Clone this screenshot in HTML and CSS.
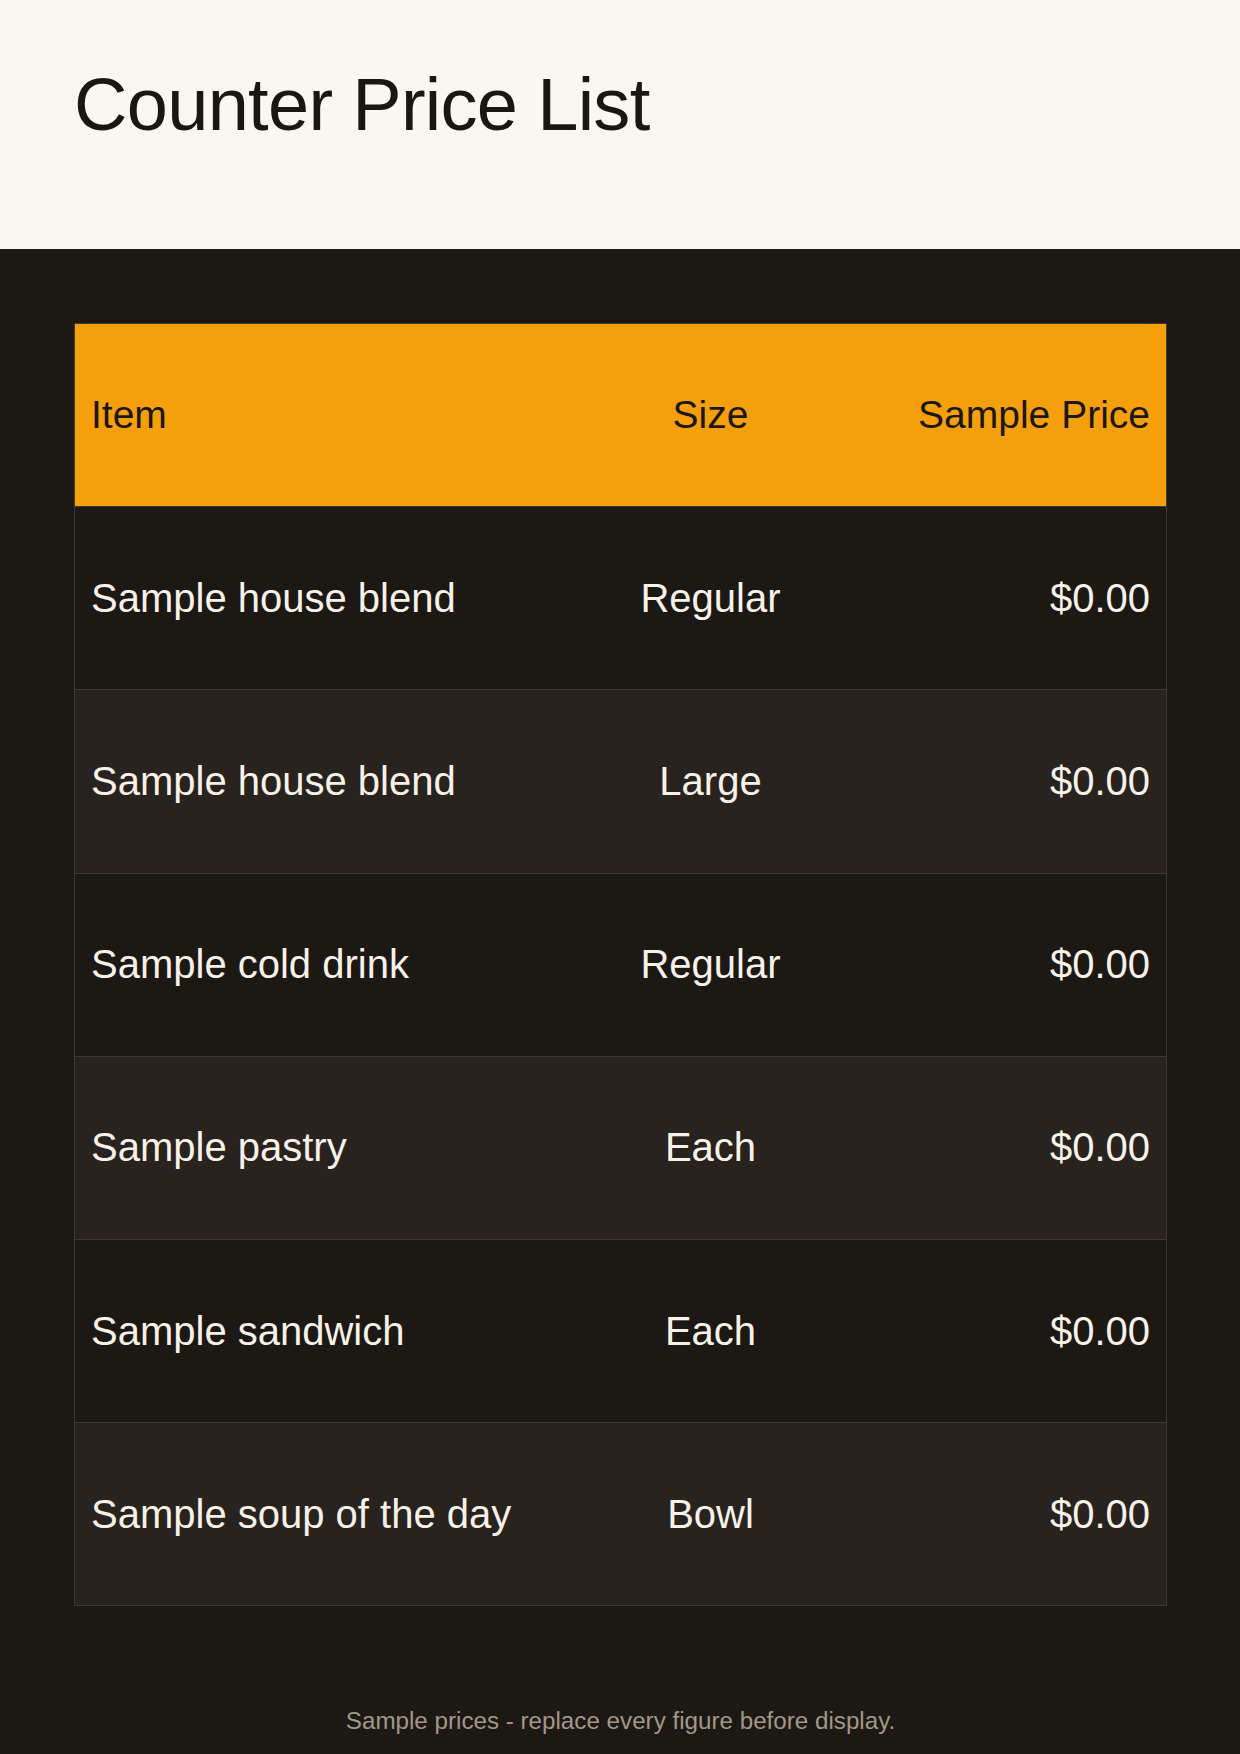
FILE: index.html
```html
<!DOCTYPE html>
<html lang="en">

<head>
    <meta charset="UTF-8">
    <meta name="viewport" content="width=device-width, initial-scale=1.0">
    <title>Counter Price List</title>
    <link rel="stylesheet" href="styles.css">
</head>

<body>
    <header class="page-header">
        <h1 class="page-title">Counter Price List</h1>
    </header>
    <main class="board">
        <table class="price-table">
            <colgroup>
                <col class="col-item">
                <col class="col-size">
                <col class="col-price">
            </colgroup>
            <thead>
                <tr>
                    <th class="cell-item">Item</th>
                    <th class="cell-size">Size</th>
                    <th class="cell-price">Sample Price</th>
                </tr>
            </thead>
            <tbody>
                <tr>
                    <td class="cell-item">Sample house blend</td>
                    <td class="cell-size">Regular</td>
                    <td class="cell-price">$0.00</td>
                </tr>
                <tr>
                    <td class="cell-item">Sample house blend</td>
                    <td class="cell-size">Large</td>
                    <td class="cell-price">$0.00</td>
                </tr>
                <tr>
                    <td class="cell-item">Sample cold drink</td>
                    <td class="cell-size">Regular</td>
                    <td class="cell-price">$0.00</td>
                </tr>
                <tr>
                    <td class="cell-item">Sample pastry</td>
                    <td class="cell-size">Each</td>
                    <td class="cell-price">$0.00</td>
                </tr>
                <tr>
                    <td class="cell-item">Sample sandwich</td>
                    <td class="cell-size">Each</td>
                    <td class="cell-price">$0.00</td>
                </tr>
                <tr>
                    <td class="cell-item">Sample soup of the day</td>
                    <td class="cell-size">Bowl</td>
                    <td class="cell-price">$0.00</td>
                </tr>
            </tbody>
        </table>
        <p class="note">Sample prices - replace every figure before display.</p>
    </main>
</body>

</html>
```

FILE: styles.css
```css
/* Counter board: light title strip, dark price table */
html {
    background-color: #1c1814;
}

body {
    margin: 0;
    font-family: 'Liberation Sans', Arial, sans-serif;
    color: #f7f1e8;
    background-color: #1c1814;
}

.page-header {
    box-sizing: border-box;
    height: 249px;
    padding: 68px 74px 0;
    background-color: #faf7f2;
}

.page-title {
    margin: 0;
    font-size: 74px;
    font-weight: 400;
    line-height: 1;
    letter-spacing: -0.7px;
    color: #1a1612;
}

.board {
    padding: 74px 73px 20px 74px;
}

.price-table {
    width: 100%;
    border-collapse: collapse;
    table-layout: fixed;
    border: 1px solid #3f3933;
}

.col-item {
    width: 511px;
}

.col-size {
    width: 250px;
}

th, td {
    height: 182.2px;
    padding: 0 16px 0 16px;
    vertical-align: middle;
    font-weight: 400;
    border-bottom: 1px solid #3f3933;
}

th {
    background-color: #f59f0b;
    color: #1c1712;
    font-size: 39px;
}

td {
    font-size: 40px;
}

tbody tr:nth-child(odd) {
    background-color: #1c1814;
}

tbody tr:nth-child(even) {
    background-color: #28231f;
}

.cell-item {
    text-align: left;
}

.cell-size {
    text-align: center;
}

.cell-price {
    text-align: right;
}

.note {
    margin: 103px 0 0;
    font-size: 24.2px;
    line-height: 1;
    text-align: center;
    color: #a39787;
}
```
